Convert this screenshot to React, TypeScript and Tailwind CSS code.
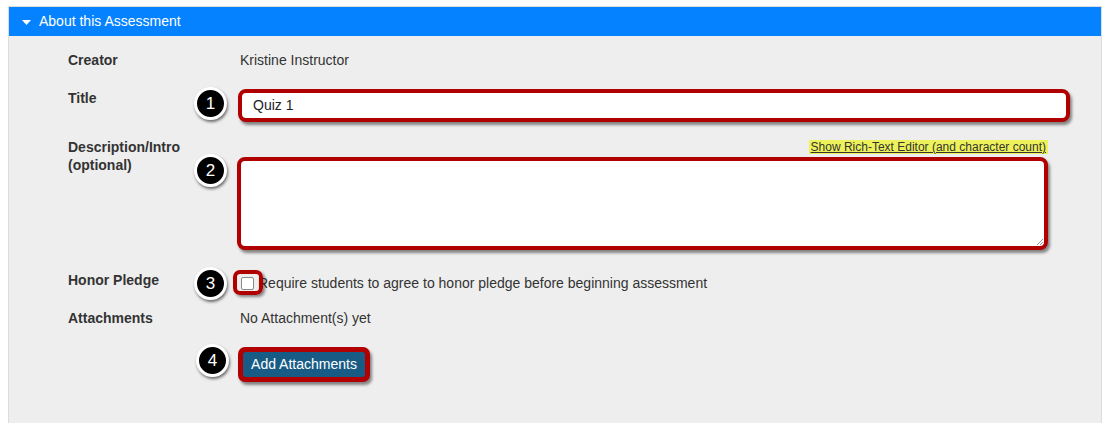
import React from "react";

function Badge({ n, className }: { n: number; className: string }) {
  return (
    <div
      className={
        "absolute w-[33px] h-[33px] rounded-full bg-black border-[3px] border-white shadow-[1px_2px_3px_rgba(0,0,0,0.55)] flex items-center justify-center text-white text-[17px] leading-none z-20 " +
        className
      }
    >
      {n}
    </div>
  );
}

export default function App() {
  return (
    <div className="w-[1110px] h-[423px] bg-white overflow-hidden font-['Liberation_Sans',Arial,sans-serif] text-[14px] text-[#333333]">
      <div className="mx-[8px] mt-[6px] h-[417px] border border-b-0 border-[#dddddd] bg-[#eeeeee] flex flex-col">
        <div className="h-[29px] bg-[#0582ff] flex items-center text-white pl-[13px]">
          <svg width="9" height="5" viewBox="0 0 9 5" className="mt-[1px]">
            <path d="M0 0 L9 0 L4.5 5 Z" fill="white" />
          </svg>
          <span className="ml-[8px] text-[14px]">About this Assessment</span>
        </div>

        <div className="pl-[59px] pt-[14px] flex flex-col">
          {/* Creator */}
          <div className="flex items-center h-[20px]">
            <div className="w-[170px] font-bold">Creator</div>
            <div className="pl-[2px]">Kristine Instructor</div>
          </div>

          {/* Title */}
          <div className="flex items-start mt-[18px]">
            <div className="w-[170px] font-bold leading-[20px]">Title</div>
            <div className="relative">
              <Badge n={1} className="left-[-44px] top-[-1px]" />
              <div className="mt-[1px] w-[832px] h-[33px] border-4 border-[#b00000] rounded-[8px] bg-white shadow-[2px_3px_3px_rgba(0,0,0,0.45)] flex items-center pl-[11px] text-[14px] text-[#222]">
                Quiz 1
              </div>
            </div>
          </div>

          {/* Description */}
          <div className="flex items-start mt-[16px]">
            <div className="w-[170px] font-bold leading-[18px]">
              Description/Intro
              <br />
              (optional)
            </div>
            <div className="relative w-[810px]">
              <Badge n={2} className="left-[-44px] top-[16px]" />
              <div className="flex justify-end h-[18px] items-center">
                <span className="bg-[#eef25a] text-[12px] leading-[14px] px-[2px] text-[#333] underline">
                  Show Rich-Text Editor (and character count)
                </span>
              </div>
              <div className="relative mt-[1px] w-[811px] ml-[-1px] h-[93px] border-4 border-[#b00000] rounded-[8px] bg-white shadow-[2px_3px_3px_rgba(0,0,0,0.45)]">
                <svg width="6" height="6" viewBox="0 0 6 6" className="absolute right-[1px] bottom-[1px]">
                  <path d="M6 0 L0 6 M6 3 L3 6" stroke="#999" strokeWidth="1" />
                </svg>
              </div>
            </div>
          </div>

          {/* Honor Pledge */}
          <div className="flex items-start mt-[21px]">
            <div className="w-[170px] font-bold leading-[18px]">Honor Pledge</div>
            <div className="relative flex items-center h-[20px] mt-[2px]">
              <Badge n={3} className="left-[-44px] top-[-6px]" />
              <div className="relative ml-[3px] mr-[4px]">
                <span className="block w-[13px] h-[13px] bg-white border border-[#8a8a8a] rounded-[2px]" />
                <span className="absolute left-[-8px] top-[-7px] w-[30px] h-[25px] border-4 border-[#b00000] rounded-[7px] shadow-[2px_2px_3px_rgba(0,0,0,0.45)] z-10" />
              </div>
              <span className="text-[#333]">Require students to agree to honor pledge before beginning assessment</span>
            </div>
          </div>

          {/* Attachments */}
          <div className="flex items-center h-[20px] mt-[15px]">
            <div className="w-[170px] font-bold">Attachments</div>
            <div className="pl-[2px]">No Attachment(s) yet</div>
          </div>

          {/* Button */}
          <div className="flex items-start mt-[19px]">
            <div className="w-[170px]" />
            <div className="relative">
              <Badge n={4} className="left-[-42px] top-[-3px]" />
              <div className="w-[132px] h-[35px] border-4 border-[#b00000] rounded-[7px] p-[1px] shadow-[2px_3px_3px_rgba(0,0,0,0.45)] bg-[#b00000]">
                <div className="w-full h-full bg-[#185c85] rounded-[3px] flex items-center justify-center text-white text-[14px]">
                  Add Attachments
                </div>
              </div>
            </div>
          </div>
        </div>
      </div>
    </div>
  );
}
